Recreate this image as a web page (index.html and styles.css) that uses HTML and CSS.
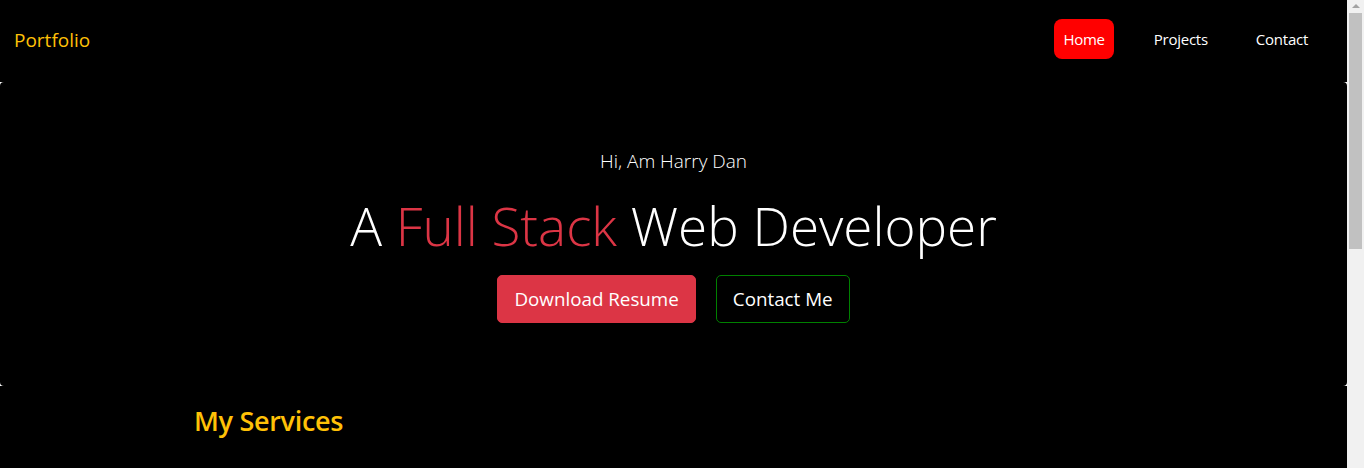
FILE: index.html
```html
<!DOCTYPE html>
<html lang="en">
<head>
<meta charset="utf-8">
<title>Portfolio</title>
<link rel="stylesheet" href="styles.css">
</head>
<body>
<div class="page">
  <main class="main">
    <header class="navbar">
      <a class="brand" href="#">Portfolio</a>
      <nav class="nav">
        <a class="nav-link active" href="#">Home</a>
        <a class="nav-link" href="#">Projects</a>
        <a class="nav-link" href="#">Contact</a>
      </nav>
    </header>
    <div class="hero-wrap">
      <section class="hero">
        <p class="lead">Hi, Am Harry Dan</p>
        <h1 class="display">A <span class="accent">Full Stack</span> Web Developer</h1>
        <div class="actions">
          <a class="btn btn-red" href="#">Download Resume</a>
          <a class="btn btn-outline" href="#">Contact Me</a>
        </div>
      </section>
    </div>
    <section class="services">
      <h3 class="section-title">My Services</h3>
    </section>
  </main>
  <div class="scrollbar" aria-hidden="true">
    <span class="scroll-arrow"></span>
    <span class="scroll-thumb"></span>
  </div>
</div>
</body>
</html>
```
FILE: styles.css
```css
html, body {
  margin: 0;
  padding: 0;
  background: #000;
  color: #fff;
  font-family: "Open Sans", "Noto Sans", sans-serif;
  overflow: hidden;
}
a { text-decoration: none; }

.page {
  display: grid;
  grid-template-columns: 1fr 17px;
  height: 100vh;
}
.main {
  min-width: 0;
}

.scrollbar {
  background: #f1f1f1;
  display: flex;
  flex-direction: column;
  align-items: center;
}
.scroll-arrow {
  width: 0;
  height: 0;
  border-left: 4px solid transparent;
  border-right: 4px solid transparent;
  border-bottom: 4px solid #a3a3a3;
  margin: 4px 0 5px;
}
.scroll-thumb {
  width: 13px;
  height: 236px;
  background: #c1c1c1;
}

.navbar {
  height: 82px;
  display: flex;
  align-items: center;
  justify-content: space-between;
  padding: 0 31px 4px 14px;
  box-sizing: border-box;
}
.brand {
  color: #ffc107;
  font-size: 19px;
  line-height: 1;
  margin-top: 2px;
}
.nav {
  display: flex;
  gap: 32px;
}
.nav-link {
  color: #fff;
  font-size: 15px;
  padding: 0 8px;
  height: 40px;
  line-height: 40px;
  border-radius: 8px;
  letter-spacing: -0.25px;
}
.nav-link.active {
  background: #ff0000;
  padding: 0 9px;
}

.hero-wrap {
  background: #fff;
}
.hero {
  background: #000;
  border-radius: 4px;
  height: 304px;
  box-sizing: border-box;
  padding-top: 64px;
  text-align: center;
}
.lead {
  margin: 0 0 17px;
  font-size: 19px;
  line-height: 30px;
  font-weight: 300;
}
.display {
  margin: 0 0 16px;
  font-size: 53px;
  line-height: 66px;
  font-weight: 300;
}
.accent { color: #dc3545; }

.actions {
  display: flex;
  justify-content: center;
  gap: 20px;
}
.btn {
  display: inline-block;
  height: 48px;
  box-sizing: border-box;
  padding: 0 16px;
  line-height: 46px;
  font-size: 18.8px;
  border-radius: 5px;
  color: #fff;
  border: 1px solid transparent;
}
.btn-red {
  background: #dc3545;
  border-color: #dc3545;
}
.btn-outline {
  border-color: #008000;
}

.services {
  padding: 18px 0 0 194px;
}
.section-title {
  margin: 0;
  color: #ffc107;
  font-size: 27px;
  line-height: 34px;
  font-weight: 600;
  letter-spacing: -0.3px;
}
```
